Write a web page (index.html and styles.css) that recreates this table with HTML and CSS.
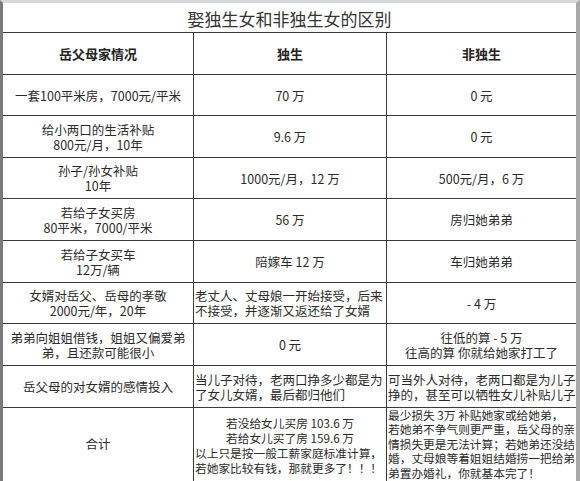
FILE: index.html
```html
<!DOCTYPE html>
<html lang="zh">
<head>
<meta charset="utf-8">
<link rel="stylesheet" href="styles.css">
</head>
<body>
<div class="sheet">
  <div class="cell title">娶独生女和非独生女的区别</div>

  <div class="cell head">岳父母家情况</div>
  <div class="cell head">独生</div>
  <div class="cell head last">非独生</div>

  <div class="cell">一套100平米房，7000元/平米</div>
  <div class="cell">70 万</div>
  <div class="cell last">0 元</div>

  <div class="cell">给小两口的生活补贴<br>800元/月，10年</div>
  <div class="cell">9.6 万</div>
  <div class="cell last">0 元</div>

  <div class="cell">孙子/孙女补贴<br>10年</div>
  <div class="cell">1000元/月，12 万</div>
  <div class="cell last">500元/月，6 万</div>

  <div class="cell">若给子女买房<br>80平米，7000/平米</div>
  <div class="cell">56 万</div>
  <div class="cell last">房归她弟弟</div>

  <div class="cell">若给子女买车<br>12万/辆</div>
  <div class="cell">陪嫁车 12 万</div>
  <div class="cell last">车归她弟弟</div>

  <div class="cell">女婿对岳父、岳母的孝敬<br>2000元/年，20年</div>
  <div class="cell left">老丈人、丈母娘一开始接受，后来<br>不接受，并逐渐又返还给了女婿</div>
  <div class="cell last">- 4 万</div>

  <div class="cell">弟弟向姐姐借钱，姐姐又偏爱弟<br>弟，且还款可能很小</div>
  <div class="cell">0 元</div>
  <div class="cell last">往低的算 - 5 万<br>往高的算 你就给她家打工了</div>

  <div class="cell">岳父母的对女婿的感情投入</div>
  <div class="cell left">当儿子对待，老两口挣多少都是为<br>了女儿女婿，最后都归他们</div>
  <div class="cell left last">可当外人对待，老两口都是为儿子<br>挣的，甚至可以牺牲女儿补贴儿子</div>

  <div class="cell total">合计</div>
  <div class="cell small"><div class="c">若没给女儿买房 103.6 万</div><div class="c">若给女儿买了房 159.6 万</div><div class="l">以上只是按一般工薪家庭标准计算，<br>若她家比较有钱，那就更多了！！！</div></div>
  <div class="cell small top last">最少损失 3万 补贴她家或给她弟，<br>若她弟不争气则更严重，岳父母的亲<br>情损失更是无法计算；若她弟还没结<br>婚，丈母娘等着姐姐结婚捞一把给弟<br>弟置办婚礼，你就基本完了！</div>
</div>
</body>
</html>
```

FILE: styles.css
```css
html, body {
  margin: 0;
  padding: 0;
  background: #ffffff;
}

.sheet {
  box-sizing: border-box;
  width: 580px;
  height: 481px;
  overflow: hidden;
  border-top: 3px solid #d6d9dc;
  border-left: 3px solid #7a7a7a;
  border-right: 4px solid #a8a8a8;
  display: grid;
  grid-template-columns: 191px 193px 189px;
  grid-template-rows: 30px 42px 41px 42px 41px 42px 42px 41px 42px 42px 90px;
  font-family: "Noto Sans CJK SC", sans-serif;
  font-size: 12.5px;
  line-height: 15px;
  color: #2b2b2b;
}

.cell {
  box-sizing: border-box;
  border-right: 1px solid #3a3a3a;
  border-bottom: 1px solid #3a3a3a;
  display: flex;
  flex-direction: column;
  justify-content: center;
  align-items: center;
  text-align: center;
  white-space: nowrap;
  padding: 0 1px;
}

.cell.last {
  border-right: none;
}

.title {
  grid-column: 1 / -1;
  border-right: none;
  font-size: 17px;
  color: #333;
  padding-top: 1px;
}

.head {
  font-weight: bold;
  font-size: 13px;
  color: #222;
}

.left {
  align-items: flex-start;
  text-align: left;
}

.total {
  justify-content: flex-start;
  padding-top: 28px;
}

.small {
  font-size: 11.7px;
  justify-content: flex-start;
  align-items: stretch;
  padding-top: 7px;
}

.small .c {
  text-align: center;
}

.small .l {
  text-align: left;
}

.small.top {
  padding-top: 0;
  line-height: 14.4px;
  align-items: flex-start;
  text-align: left;
}
```
